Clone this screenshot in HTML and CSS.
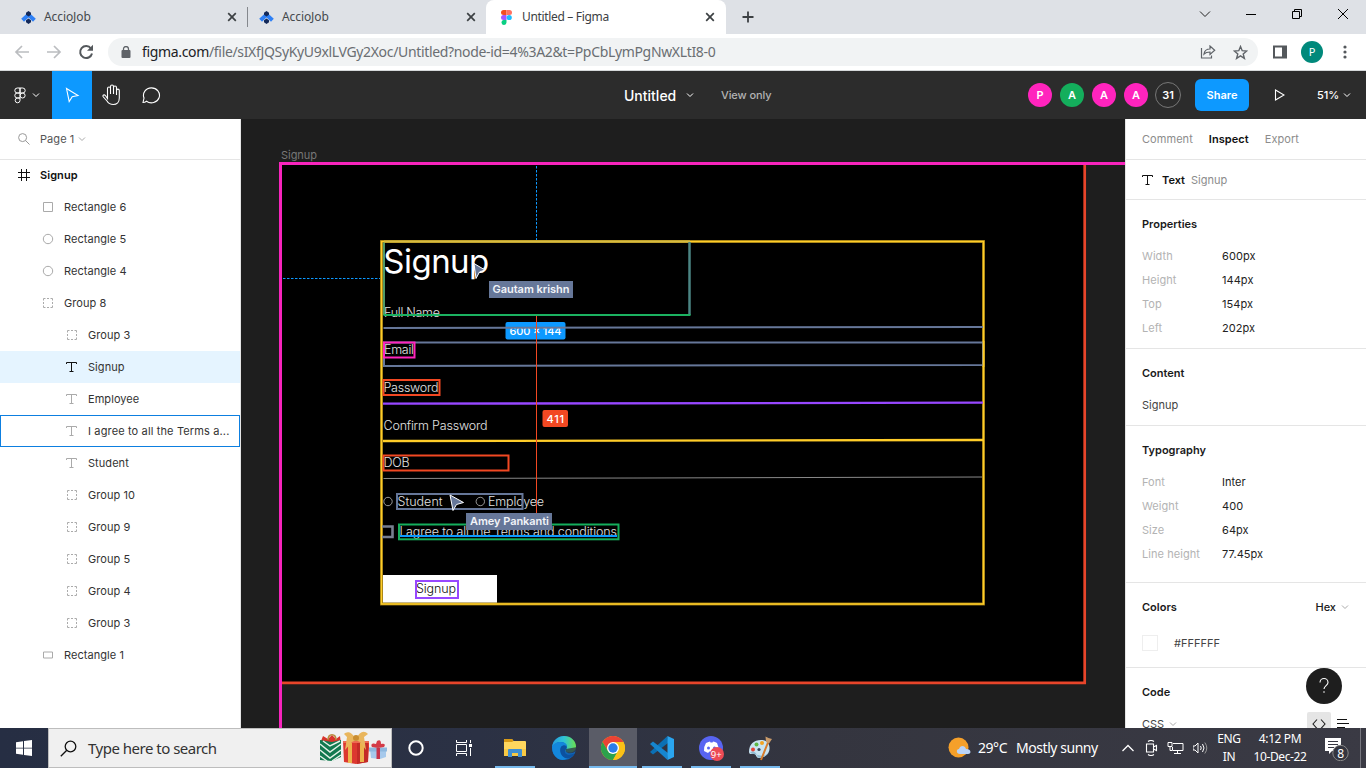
FILE: index.html
```html
<!DOCTYPE html>
<html lang="en">
<head>
<meta charset="utf-8">
<title>Untitled – Figma</title>
<link rel="stylesheet" href="styles.css">
</head>
<body>
<svg class="defs" width="0" height="0">
  <defs>
    <symbol id="chev" viewBox="0 0 8 8"><path d="M1 2.500l3 3 3-3" fill="none" stroke="currentColor"/></symbol>
    <symbol id="close" viewBox="0 0 10 10"><path d="M1.200 1.200l7.600 7.600M8.800 1.200l-7.600 7.600" fill="none" stroke="#3c4043" stroke-width="1.700"/></symbol>
    <symbol id="accio" viewBox="0 0 15 13"><path d="M7.500 1L14.800 7.800 12 10.800 7.500 6.500 3 10.800.2 7.800z" fill="#2f80f5"/><path d="M7.500 0l2.500 1.800v2L7.500 5.500 5 3.800v-2zM7.500 7.500L10 9.200v2L7.500 13 5 11.200v-2z" fill="#13295a"/></symbol>
    <symbol id="text" viewBox="0 0 12 12"><path d="M.5 3V1.500h10V3M5.500 1.500v9M3.500 10.500h4" fill="none" stroke="currentColor"/></symbol>
    <symbol id="group" viewBox="0 0 12 12"><path d="M1.500 3.500v-2h2M5 1.500h2M8.500 1.500h2v2M10.500 5v2M10.500 8.500v2h-2M7 10.500H5M3.500 10.500h-2v-2M1.500 7V5" fill="none" stroke="currentColor"/></symbol>
    <symbol id="square" viewBox="0 0 12 12"><path d="M1.500 1.500h9v9h-9z" fill="none" stroke="currentColor"/></symbol>
    <symbol id="circle" viewBox="0 0 12 12"><circle cx="6" cy="6" r="4.700" fill="none" stroke="currentColor"/></symbol>
    <symbol id="rect" viewBox="0 0 12 12"><path d="M1.500 3h9v6h-9z" fill="none" stroke="currentColor"/></symbol>
  </defs>
</svg>

<header class="tabs">
  <div class="tab tab-first"><svg class="fav" width="15" height="13"><use href="#accio"/></svg><span class="tab-name accio">AccioJob</span><svg width="10" height="10"><use href="#close"/></svg></div>
  <div class="tab tab-second"><svg class="fav" width="15" height="13"><use href="#accio"/></svg><span class="tab-name accio">AccioJob</span><svg width="10" height="10"><use href="#close"/></svg></div>
  <div class="tab tab-active"><svg class="fav-figma" width="11" height="15" viewBox="0 0 11 15"><path d="M5.500 0H2.500a2.500 2.500 0 000 5h3z" fill="#f24e1e"/><path d="M5.500 0h3a2.500 2.500 0 010 5h-3z" fill="#ff7262"/><path d="M5.500 5H2.500a2.500 2.500 0 000 5h3z" fill="#a259ff"/><circle cx="8.200" cy="7.500" r="2.600" fill="#1abcfe"/><path d="M5.500 10H2.500A2.500 2.500 0 105.500 12.500z" fill="#0acf83"/></svg><span class="tab-name">Untitled – Figma</span><svg width="10" height="10"><use href="#close"/></svg></div>
  <svg class="plus" width="12" height="12" viewBox="0 0 12 12"><path d="M6 .5v11M.5 6h11" stroke="#3c4043" stroke-width="1.800"/></svg>
  <div class="win">
    <svg width="12" height="12" viewBox="0 0 12 12"><path d="M1 3.500l5 5 5-5" fill="none" stroke="#222"/></svg>
    <svg width="12" height="12" viewBox="0 0 12 12"><path d="M1 6.500h10" stroke="#000"/></svg>
    <svg width="12" height="12" viewBox="0 0 12 12"><path d="M1.500 3.500h7v7h-7zM3.500 3.500v-2h7v7h-2" fill="none" stroke="#000"/></svg>
    <svg width="12" height="12" viewBox="0 0 12 12"><path d="M1 1l10 10M11 1L1 11" stroke="#000"/></svg>
  </div>
</header>

<nav class="toolbar">
  <svg width="16" height="16" viewBox="0 0 16 16"><path d="M15 8H2M8 2L2 8l6 6" fill="none" stroke="#bbbdc0" stroke-width="1.700"/></svg>
  <svg width="16" height="16" viewBox="0 0 16 16"><path d="M1 8h13M8 2l6 6-6 6" fill="none" stroke="#bbbdc0" stroke-width="1.700"/></svg>
  <svg width="16" height="16" viewBox="0 0 16 16"><path d="M13 4.500A6 6 0 1014 9.500" fill="none" stroke="#54585c" stroke-width="2"/><path d="M15 .8v6H9z" fill="#54585c"/></svg>
  <div class="omni">
    <svg class="lock" width="10" height="12" viewBox="0 0 10 12"><rect x=".5" y="4" width="9" height="8" rx="1" fill="#5f6368"/><path d="M2.500 4.500V3a2.500 2.500 0 015 0v1.500" fill="none" stroke="#5f6368" stroke-width="1.300"/></svg>
    <span class="url"><b>figma.com</b>/file/sIXfJQSyKyU9xlLVGy2Xoc/Untitled?node-id=4%3A2&amp;t=PpCbLymPgNwXLtI8-0</span>
    <svg width="16" height="14" viewBox="0 0 16 14"><path d="M1.500 3v10h10v-2.500M4 9c.5-3.500 2.500-5 6-5V1l4.700 4.300L10 9.500V7C7 7 5.500 7.500 4 9z" fill="none" stroke="#5f6368" stroke-width="1.200"/></svg>
    <svg class="star" width="15" height="15" viewBox="0 0 15 15"><path d="M7.500 1.500l1.700 4.200 4.500.3-3.500 2.900 1.200 4.500-3.900-2.500-3.900 2.500 1.200-4.500L1.300 6l4.500-.3z" fill="none" stroke="#5f6368" stroke-width="1.400"/></svg>
  </div>
  <svg class="side" width="14" height="14" viewBox="0 0 14 14"><path d="M1 1.500h12v11H1z" fill="#fff" stroke="#54585c" stroke-width="2"/><path d="M9 1h4v12H9z" fill="#54585c"/></svg>
  <span class="profile">P</span>
  <svg class="dots" width="4" height="14" viewBox="0 0 4 14" fill="#54585c"><circle cx="2" cy="2" r="1.600"/><circle cx="2" cy="7" r="1.600"/><circle cx="2" cy="12" r="1.600"/></svg>
</nav>

<section class="figbar">
  <div class="menu">
    <svg width="12" height="17" viewBox="0 0 12 17"><path d="M6 1H3.300a2.400 2.400 0 000 5H6zM6 1h2.700a2.400 2.400 0 010 5H6zM6 6H3.300a2.400 2.400 0 000 5H6zM3.300 11A2.400 2.400 0 106 13.500V11z" fill="none" stroke="#fff"/><circle cx="8.600" cy="8.500" r="2.500" fill="none" stroke="#fff"/></svg>
    <svg width="8" height="8"><use href="#chev"/></svg>
  </div>
  <div class="tool tool-on"><svg width="16" height="16" viewBox="0 0 16 16"><path d="M2.500 1.500l11.500 7-5.800 1.300-3 4.700z" fill="none" stroke="#fff" stroke-width="1.100"/></svg></div>
  <div class="tool"><svg width="20" height="22" viewBox="0 0 20 22"><path d="M5.500 12V4.500a1.500 1.500 0 013 0V10 2.500a1.500 1.500 0 013 0V10 3.500a1.500 1.500 0 013 0V11 6.500a1.400 1.400 0 012.800 0V14c0 4-2.500 6.500-6 6.500-3.200 0-5-1.300-6.300-3.500L1.200 12.800c-.8-1.500 1-2.600 2-1.500L5.500 14.500V4.500" fill="none" stroke="#fff" stroke-width="1.100"/></svg></div>
  <div class="tool"><svg width="20" height="18" viewBox="0 0 20 18"><path d="M1 16.500l1-4.500a8 7.500 0 112.500 3.200C3.500 16 2.500 16.500 1 16.500z" fill="none" stroke="#fff" stroke-width="1.100"/></svg></div>
  <div class="doc"><span class="doc-name">Untitled</span><svg width="8" height="8"><use href="#chev"/></svg><span class="viewonly">View only</span></div>
  <div class="people"><i>P</i><i class="green">A</i><i>A</i><i>A</i><i class="more">31</i></div>
  <div class="share">Share</div>
  <svg class="play" width="11" height="12" viewBox="0 0 11 12"><path d="M1.500 1v10l8.500-5z" fill="none" stroke="#fff" stroke-width="1.100"/></svg>
  <span class="zoom">51%</span><svg class="zchev" width="8" height="8"><use href="#chev"/></svg>
</section>

<main class="work">
  <aside class="layers">
    <div class="page"><svg width="12" height="12" viewBox="0 0 12 12"><circle cx="4.600" cy="4.600" r="4" fill="none" stroke="#999"/><path d="M7.500 7.500L11.500 11.500" stroke="#999"/></svg><span>Page 1</span><svg class="pchev" width="8" height="8"><use href="#chev"/></svg></div>
    <div class="row frame"><svg width="12" height="12" viewBox="0 0 12 12"><path d="M3.500 0v12M8.500 0v12M0 3.500h12M0 8.500h12" stroke="#111"/></svg><span>Signup</span></div>
    <div class="row l1"><svg><use href="#square"/></svg><span>Rectangle 6</span></div>
    <div class="row l1"><svg><use href="#circle"/></svg><span>Rectangle 5</span></div>
    <div class="row l1"><svg><use href="#circle"/></svg><span>Rectangle 4</span></div>
    <div class="row l1"><svg><use href="#group"/></svg><span>Group 8</span></div>
    <div class="row l2"><svg><use href="#group"/></svg><span>Group 3</span></div>
    <div class="row l2 selected"><svg><use href="#text"/></svg><span>Signup</span></div>
    <div class="row l2"><svg><use href="#text"/></svg><span>Employee</span></div>
    <div class="row l2 hovered"><svg><use href="#text"/></svg><span>I agree to all the Terms a...</span></div>
    <div class="row l2"><svg><use href="#text"/></svg><span>Student</span></div>
    <div class="row l2"><svg><use href="#group"/></svg><span>Group 10</span></div>
    <div class="row l2"><svg><use href="#group"/></svg><span>Group 9</span></div>
    <div class="row l2"><svg><use href="#group"/></svg><span>Group 5</span></div>
    <div class="row l2"><svg><use href="#group"/></svg><span>Group 4</span></div>
    <div class="row l2"><svg><use href="#group"/></svg><span>Group 3</span></div>
    <div class="row l1"><svg><use href="#rect"/></svg><span>Rectangle 1</span></div>
  </aside>

  <svg class="canvas" width="884" height="609" viewBox="241 119 884 609">
    <text x="281" y="159" class="label" textLength="36">Signup</text>
    <rect x="281" y="164" width="804" height="519" fill="#000"/>
    <path d="M1084.700 165v519M282 682.800h804" class="ln" stroke="#e8452a" stroke-width="2.700"/>
    <path d="M280.500 728V163.500H1125" class="ln" stroke="#f824bd" stroke-width="3"/>
    <path d="M283 278.500h98M536.500 166v74" class="ln" stroke="#0d99ff" stroke-dasharray="2.500 1.500"/>
    <text x="383.300" y="273" class="title" textLength="106">Signup</text>
    <g class="field">
      <text x="384" y="316.500" textLength="56">Full Name</text>
      <text x="384" y="354" textLength="30">Email</text>
      <text x="383.500" y="391.500" textLength="55">Password</text>
      <text x="383.500" y="430" textLength="104">Confirm Password</text>
      <text x="383.500" y="467" textLength="26">DOB</text>
      <text x="397.500" y="506" textLength="45">Student</text>
      <text x="488" y="506" textLength="56">Employee</text>
      <text x="399.500" y="536" textLength="217.500">I agree to all the Terms and conditions</text>
    </g>
    <circle cx="388" cy="501.500" r="4.200" fill="none" stroke="#bbb" stroke-width=".8"/>
    <circle cx="480.300" cy="501.500" r="4.200" fill="none" stroke="#bbb" stroke-width=".8"/>
    <rect x="383" y="575" width="114" height="29" fill="#fff"/>
    <text x="416" y="593" class="btn" textLength="40">Signup</text>
    <path d="M383.500 478.500L640 478 983 477" class="ln" stroke="#999" stroke-width=".9"/>
    <rect x="505.500" y="322" width="60" height="17.500" rx="2" fill="#0d99ff"/>
    <text x="509.500" y="335" class="badge" textLength="52">600 × 144</text>
    <rect x="381.500" y="241.500" width="602" height="362.500" class="ln" stroke="#8a6d12" stroke-width="3"/>
    <rect x="381.500" y="241.500" width="602" height="362.500" class="ln" stroke="#ffcd29" stroke-width="1.600"/>
    <path d="M384 315V242.500" class="ln" stroke="#4f9a68" stroke-width="2"/>
    <path d="M384 241.500h306" class="ln" stroke="#d6bc42" stroke-width="2"/>
    <path d="M689.500 242v73" class="ln" stroke="#4b8583" stroke-width="2.500"/>
    <path d="M383.500 315h307" class="ln" stroke="#1bb160" stroke-width="2"/>
    <path d="M383.500 328L983 327M384 342.500H983V365L384 366z" class="ln" stroke="#667799" stroke-width="2"/>
    <path d="M983.500 341v26" class="ln" stroke="#ffcd29" stroke-width="1.800"/>
    <path d="M383 403.700L983 402.700" class="ln" stroke="#9747ff" stroke-width="2.300"/>
    <path d="M383 441L983 440" class="ln" stroke="#ffcd29" stroke-width="2.300"/>
    <path d="M536.500 316v197" class="ln" stroke="#f24822" stroke-width="1"/>
    <rect x="542.500" y="410" width="25.500" height="17" rx="2" fill="#f24822"/>
    <text x="546.500" y="422.500" class="badge" textLength="17.500">411</text>
    <rect x="384" y="342.500" width="30.500" height="15" class="ln" stroke="#ff24bd" stroke-width="2"/>
    <rect x="383.500" y="380" width="56" height="15" class="ln" stroke="#f24822" stroke-width="2"/>
    <rect x="383.500" y="455.500" width="125" height="15" class="ln" stroke="#f24822" stroke-width="2"/>
    <rect x="397" y="494" width="125.500" height="15" class="ln" stroke="#667799" stroke-width="2"/>
    <path d="M382 526.500h10.500v10.500H382" class="ln" stroke="#777f90" stroke-width="2.600"/>
    <path d="M400 536h217" class="ln" stroke="#0d99ff" stroke-width="2"/>
    <rect x="399" y="524.500" width="219.500" height="14.800" class="ln" stroke="#14ae5c" stroke-width="2"/>
    <rect x="416" y="581" width="42" height="17" class="ln" stroke="#9747ff" stroke-width="2"/>
    <path d="M474 263.500l11 6.500-5.500 2-3.500 6.500z" fill="#667799" stroke="#fff"/>
    <rect x="489" y="281" width="84" height="17" fill="#667799"/>
    <text x="492.500" y="293" class="cursor" textLength="77">Gautam krishn</text>
    <path d="M450 495l13.500 7.500-7 2-3.500 6z" fill="#667799" stroke="#fff"/>
    <rect x="466" y="513" width="86" height="17" fill="#667799"/>
    <text x="470" y="525" class="cursor" textLength="79">Amey Pankanti</text>
  </svg>

  <aside class="inspect">
    <div class="modes"><span>Comment</span><b>Inspect</b><span>Export</span></div>
    <div class="node"><svg width="12" height="12"><use href="#text"/></svg><b>Text</b><span>Signup</span></div>
    <section class="props"><h3>Properties</h3>
      <dl><dt>Width</dt><dd>600px</dd><dt>Height</dt><dd>144px</dd><dt>Top</dt><dd>154px</dd><dt>Left</dt><dd>202px</dd></dl></section>
    <section class="content"><h3>Content</h3><p>Signup</p></section>
    <section class="typo"><h3>Typography</h3>
      <dl><dt>Font</dt><dd>Inter</dd><dt>Weight</dt><dd>400</dd><dt>Size</dt><dd>64px</dd><dt>Line height</dt><dd>77.45px</dd></dl></section>
    <section class="colors"><h3>Colors<span class="hex">Hex<svg width="8" height="8"><use href="#chev"/></svg></span></h3>
      <div class="swatch"><i></i>#FFFFFF</div></section>
    <section class="code"><h3>Code</h3>
      <div class="lang"><span>CSS</span><svg class="pchev" width="8" height="8"><use href="#chev"/></svg>
        <div class="codebtn"><svg width="14" height="12" viewBox="0 0 14 12"><path d="M5 1.500L1 6l4 4.500M9 1.500L13 6l-4 4.500" fill="none" stroke="#222" stroke-width="1.100"/></svg></div>
        <svg width="12" height="12" viewBox="0 0 12 12"><path d="M0 1.500h10M0 5.500h12M0 9.500h8" stroke="#111"/></svg></div></section>
    <div class="help"><svg width="12" height="18" viewBox="0 0 12 18"><path d="M2 5.500a4 4 0 118 0c0 3-4 3.200-4 6.500" fill="none" stroke="#fff" stroke-width="1.100"/><circle cx="6" cy="15" r=".8" fill="#fff"/></svg></div>
  </aside>
</main>

<footer class="taskbar">
  <div class="start"><svg width="16" height="16" viewBox="0 0 16 16" fill="#fff"><path d="M0 2.200l7-1v6.500H0zM8 1l8-1v7.700H8zM0 8.500h7v6.300l-7-1zM8 8.500h8V16l-8-1z"/></svg></div>
  <div class="search">
    <svg width="17" height="17" viewBox="0 0 17 17"><circle cx="10.500" cy="6.500" r="5.300" fill="none" stroke="#111" stroke-width="1.300"/><path d="M6.800 10.200L.8 16.200" stroke="#111" stroke-width="1.300"/></svg>
    <span>Type here to search</span>
    <svg class="gifts" width="70" height="34" viewBox="0 0 70 34">
      <path d="M3 10l2-5 5 3 4-4 4 4 4-3 1 8z" fill="#d8342c"/><path d="M10 9c0-7 8-7 8 0" fill="none" stroke="#b88a3c" stroke-width="1.500"/>
      <path d="M2 9l12 2 9-2v17l-9 4-12-1z" fill="#12794f"/><path d="M2 13l10 8 11-8M2 19l10 8 11-8M2 25l7 5M14 30l9-6M5 10l7 5 10-5" fill="none" stroke="#e5f2e8" stroke-width="1.500"/>
      <path d="M25 10h26v7l-1 14-12 2-12-2z" fill="#dc3830"/><path d="M39 10h11v21l-11 2z" fill="#c42b27"/><path d="M30 11h4v21h-4zM42 11h4v20h-4z" fill="#edb44c"/><path d="M25 11h26" stroke="#ed6b50" stroke-width="2"/>
      <path d="M38 8C33 0 29 0 26 3l3 3-2 13 7-8 4-2 4 2 6 8-2-13 4-3c-4-4-8-3-12 5z" fill="#e9b65d"/><circle cx="38" cy="7" r="3" fill="#c98d31"/>
      <path d="M52 18h16v8l-6 2-9-1z" fill="#a6c9ec"/><path d="M51 16.500h18v4H51z" fill="#8fb8df"/><path d="M58.500 17h3.500v11h-3.500z" fill="#c6344b"/><path d="M60 17l-6-1c-2-4 2-4 4-3l1-3c3-2 4 0 4 3 3-1 5 0 3 3z" fill="#d43b47"/>
    </svg>
  </div>
  <div class="sys"><svg width="18" height="18" viewBox="0 0 18 18"><circle cx="9" cy="9" r="6.700" fill="none" stroke="#fff" stroke-width="2"/></svg></div>
  <div class="sys"><svg width="18" height="18" viewBox="0 0 18 18"><path d="M1.500 1v2.500h10V1M1.500 5.500h10v7h-10zM1.500 17v-2.500h10V17M15.500 1v3M15.500 9v8" fill="none" stroke="#fff"/><path d="M14 5h3v3h-3z" fill="#fff"/></svg></div>
  <div class="apps">
    <div class="app run"><svg width="24" height="24" viewBox="0 0 24 24"><path d="M1 4q0-1 1-1h7l1.500 2H22q1 0 1 1v14H1z" fill="#ffd75e"/><path d="M1 6V4q0-1 1-1h7l1.500 2L9 6z" fill="#d99a15"/><path d="M1 13h22v7H1z" fill="#f8c944"/><path d="M5 14q0-1 1-1h12q1 0 1 1v7h-4v-4H9v4H5z" fill="#3f8fd2"/></svg></div>
    <div class="app"><svg width="24" height="24" viewBox="0 0 24 24"><defs><linearGradient id="eg"><stop offset="0" stop-color="#279bdc"/><stop offset=".5" stop-color="#2fc3d5"/><stop offset="1" stop-color="#6be04d"/></linearGradient></defs><circle cx="12" cy="12" r="12" fill="#1066b8"/><path d="M0 11C1 4 6 0 12 0c7 0 12 5 12 10.500 0 4-3 6-6.500 6-2.500 0-4-.8-4-2 0-1 1.500-1.500 1.500-3.500 0-3-3-5-6.500-5C5 6 2 8 0 11z" fill="url(#eg)"/><path d="M0 11c2-4 5-5 8.500-5 3.500 0 6 1.500 6.500 4-2-1.500-6-1-6.500 3-.5 5 4 8.500 8 8.500-3 3-8 3-11 1C2 20 0 16 0 11z" fill="#1387dc"/><path d="M9 11c-2 4 0 9 4 11 4 1 8-1 10-5-5 3-11 2-10-2.500 0-1 1.500-1.500 1.500-3.500-1.500-2-4-2-5.500 0z" fill="#0c51a0"/><path d="M14 13c-1.500 2.500 1 4.300 4.500 4.300 3 0 4.500-1.300 5.300-2.300l.2 1-1 3h2v-8z" fill="#2b3143" opacity=".75"/></svg></div>
    <div class="app run active"><svg width="24" height="24" viewBox="0 0 24 24"><circle cx="12" cy="12" r="12" fill="#fbc116"/><path d="M1.600 6A12 12 0 0122.400 6H12L7 15z" fill="#ea4335"/><path d="M1.600 6A12 12 0 0012 24l5-9-5 3-5-3z" fill="#2ca24c"/><path d="M17 15l-5 9A12 12 0 0022.400 6H12z" fill="#fbc116"/><circle cx="12" cy="12" r="6" fill="#fff"/><circle cx="12" cy="12" r="4.700" fill="#2b7de9"/></svg></div>
    <div class="app run"><svg width="24" height="24" viewBox="0 0 24 24"><path d="M17.500 0l.5 7L3 18.500 0 16z" fill="#0b70b5"/><path d="M0 8l3-2.500L18 17l-.5 7z" fill="#1686cf"/><path d="M17.500 0L24 3v18l-6.500 3z" fill="#2aa5ef"/></svg></div>
    <div class="app run"><svg width="26" height="26" viewBox="0 0 26 26"><circle cx="13" cy="13" r="12" fill="#5865f2"/><path d="M8 8q3-1.500 4-1.500l.5 1h2l.5-1q2 0 4 1.500 2 4 1.500 8l-4 2-1-1.500h-4L10 18l-4-2q-.5-4 2-8z" fill="#fff"/><circle cx="10.500" cy="13" r="1.500" fill="#5865f2"/><circle cx="16.500" cy="13" r="1.500" fill="#5865f2"/><circle cx="19" cy="19" r="7" fill="#ed4b55"/><text x="12.800" y="22.500" class="nine">9+</text></svg></div>
    <div class="app run"><svg width="26" height="26" viewBox="0 0 26 26"><path d="M2 17C2 9 7 5 14 5c6 0 9 4 8.500 9-.5 6-6 9-11 9-2 0-2-3-4-4-2-.8-5 1.500-5.500-2z" fill="#c9e4f2"/><path d="M3 18c3-3 5-.5 6.500 1s0 4 3 3.500c4 0 8-2 9.500-6-2 4-6 5-9 4" fill="#8fbbd3"/><circle cx="6" cy="14.500" r="2" fill="#e44438"/><circle cx="9.500" cy="9.500" r="2" fill="#5fb947"/><circle cx="15" cy="8" r="2" fill="#f2a323"/><circle cx="12" cy="14.500" r="1.600" fill="#35465a"/><path d="M22 5L14 25" stroke="#d77b2b" stroke-width="2"/><path d="M18.500 1.500l3 1.500 3.500 1-3 4.500-3-1.500z" fill="#c99a6a"/></svg></div>
  </div>
  <div class="weather"><svg width="24" height="22" viewBox="0 0 24 22"><circle cx="10.500" cy="10.500" r="10" fill="#f5a02a"/><path d="M12 17c-4 0-4-5-1-5 1-4 6-4 7 0 5-.5 6 5 2 5z" fill="#b9d3f7"/></svg><span class="deg">29°C</span><span class="cond">Mostly sunny</span></div>
  <div class="tray">
    <svg width="14" height="16" viewBox="0 0 14 16"><path d="M1.500 11L7 5.500 12.500 11" fill="none" stroke="#fff" stroke-width="1.300"/></svg>
    <svg width="14" height="16" viewBox="0 0 14 16"><path d="M4 1.500q3-2 6 0M4 14.500q3 2 6 0M2.500 4h7v8h-7zM9.500 7l3-1.500v5L9.500 9" fill="none" stroke="#fff" stroke-width="1.100"/></svg>
    <svg width="17" height="16" viewBox="0 0 17 16"><path d="M6 3.500h10v7H5.500V7M10.500 10.500v3M7 13.500h7M1 2.500h4v4H1zM3 7v3.500h2" fill="none" stroke="#fff"/></svg>
    <svg width="16" height="16" viewBox="0 0 16 16"><path d="M0 6h2l3-3v10L2 10H0z" fill="none" stroke="#fff"/><path d="M7.500 6q1.500 2 0 4M9.500 4q3 4 0 8" fill="none" stroke="#fff"/><path d="M11.800 2.500q4 5.500 0 11" fill="none" stroke="#999"/></svg>
  </div>
  <div class="lang-ind">ENG<br>IN</div>
  <div class="clock"><span>4:12 PM</span><br>10-Dec-22</div>
  <svg class="notif" width="26" height="26" viewBox="0 0 26 26"><path d="M1 3h16v13H8l-3 3v-3H1z" fill="#fff"/><path d="M4 6.500h10M4 9.500h10M4 12.500h6" stroke="#383943"/><circle cx="16.500" cy="18" r="7.700" fill="#34353f" stroke="#888"/><text x="13.300" y="22.500" class="eight">8</text></svg>
  <div class="peek"></div>
</footer>
</body>
</html>
```
FILE: styles.css
```css
* { box-sizing: border-box; }
body { margin: 0; width: 1366px; height: 768px; overflow: hidden; display: flex; flex-direction: column; font-family: Inter, sans-serif; font-size: 11px; color: #333; background: #fff; }
svg { flex: none; display: block; }
b { font-weight: 600; }
.defs { position: absolute; }

.tabs { height: 34px; flex: none; background: #dee1e6; display: flex; align-items: center; font: 12px/16px "Noto Sans", sans-serif; color: #45494d; }
.tab { display: flex; align-items: center; height: 34px; }
.tab-first { width: 248px; padding: 0 11px 0 21px; }
.tab-first::after { content: ""; width: 1px; height: 20px; background: #85888d; margin-left: 10px; margin-right: -11px; }
.tab-second { width: 238px; padding: 0 10px 0 11px; }
.tab-active { width: 240px; padding: 0 11px 0 15px; background: #fff; border-radius: 8px 8px 0 0; color: #3c4043; }
.tab-name { flex: 1; margin-left: 8px; letter-spacing: -0.1px; }
.tab-active .tab-name { margin-left: 10px; letter-spacing: -0.33px; }
.plus { margin-left: 16px; }
.win { margin-left: auto; display: flex; gap: 34px; padding: 0 17px 6px 0; }

.toolbar { height: 37px; flex: none; display: flex; align-items: center; padding-left: 14px; gap: 16px; border-bottom: 1px solid #d5d8da; }
.omni { width: 1150px; height: 28px; border-radius: 14px; background: #f1f3f4; display: flex; align-items: center; padding: 0 10px 0 13px; margin-left: -2px; }
.url { flex: 1; margin-left: 11px; font: 14px/20px "Noto Sans", sans-serif; color: #6a6e72; letter-spacing: -0.335px; white-space: nowrap; }
.url b { font-weight: 400; color: #202124; }
.star { margin-left: 17px; }
.side { margin-left: -1px; }
.profile { width: 22px; height: 22px; margin-left: -2px; border-radius: 50%; background: #00897b; color: #fff; font: 11px/22px "Noto Sans", sans-serif; text-align: center; }
.dots { margin-left: 4px; }

.figbar { height: 48px; flex: none; background: #2c2c2c; color: #fff; display: flex; align-items: center; }
.menu { width: 52px; display: flex; align-items: center; gap: 6px; padding-left: 14px; }
.tool { width: 40px; height: 48px; display: grid; place-items: center; }
.tool-on { background: #0d99ff; }
.doc { margin-left: 452px; display: flex; align-items: center; width: 404px; }
.doc-name { font-size: 14px; font-weight: 500; width: 62px; }
.viewonly { color: #b3b3b3; font-weight: 500; margin-left: 27px; letter-spacing: -0.1px; }
.people { display: flex; gap: 8px; align-items: center; }
.people i { width: 24px; height: 24px; border-radius: 50%; background: #ff24bd; font: 600 11px/24px Inter, sans-serif; text-align: center; }
.people .green { background: #14ae5c; }
.people .more { width: 26px; height: 26px; margin-left: -1px; background: none; border: 1px solid #777; }
.share { margin-left: 14px; width: 54px; height: 32px; border-radius: 6px; background: #0d99ff; font-weight: 600; line-height: 32px; text-align: center; }
.play { margin-left: 25px; }
.zoom { margin-left: 32px; width: 22px; font-weight: 500; }
.zchev { margin-left: 4px; }

.work { height: 609px; flex: none; display: flex; }
.layers { width: 241px; border-right: 1px solid #e5e5e5; flex: none; letter-spacing: 0.06px; }
.page { height: 41px; margin-bottom: -1px; border-bottom: 1px solid #e5e5e5; display: flex; align-items: center; padding-left: 18px; color: #555; }
.page span { margin-left: 10px; margin-right: 4px; }
.pchev { color: #aaa; }
.row { height: 32px; display: flex; align-items: center; gap: 10px; white-space: nowrap; }
.row svg { width: 12px; height: 12px; color: #aaa; }
.frame { padding-left: 18px; font-weight: 600; color: #111; }
.l1 { padding-left: 42px; }
.l2 { padding-left: 66px; }
.selected { background: #e5f4ff; width: 240px; }
.selected svg { color: #111; }
.hovered { width: 240px; border: 1px solid #0d7fe0; padding-left: 65px; letter-spacing: 0.14px; }

.canvas { background: #1e1e1e; font-family: Inter, sans-serif; }
.ln { fill: none; }
.label { font-size: 11px; fill: #777; }
.title { font-size: 33px; fill: #fff; font-weight: 400; }
.field { font-size: 12.5px; fill: #e2e2e2; font-weight: 300; }
.btn { font-size: 12.5px; fill: #111; font-weight: 300; }
.badge { font-size: 11px; font-weight: 500; fill: #fff; }
.cursor { font-size: 11px; font-weight: 600; fill: #f2f4f8; }

.inspect { width: 241px; border-left: 1px solid #e5e5e5; position: relative; overflow: hidden; }
.modes, .node { border-bottom: 1px solid #e5e5e5; display: flex; align-items: center; padding-left: 16px; color: #8c8c8c; }
.modes { height: 41px; gap: 16px; letter-spacing: 0.06px; }
.modes b, .node b { color: #111; font-weight: 600; }
.node { height: 40px; }
.node svg { color: #111; }
.node b { margin: 0 6px 0 8px; }
.inspect section { border-bottom: 1px solid #e5e5e5; padding: 8px 16px 0; }
.inspect h3 { margin: 0 0 4px; font-size: 11px; font-weight: 600; line-height: 32px; color: #1a1a1a; display: flex; }
.inspect dl { margin: 0; display: grid; grid-template-columns: 80px 1fr; line-height: 24px; letter-spacing: 0.06px; }
.inspect dt { color: #b3b3b3; }
.inspect dd { margin: 0; color: #222; }
.inspect p { margin: 0; line-height: 24px; color: #444; }
.inspect .props { height: 149px; }
.inspect .content { height: 77px; }
.inspect .typo { height: 157px; }
.inspect .colors { height: 85px; }
.inspect .code { border: 0; }
.hex { margin-left: auto; margin-right: 1px; font-weight: 500; display: flex; align-items: center; gap: 5px; }
.hex svg { color: #aaa; }
.swatch { display: flex; align-items: center; gap: 16px; height: 32px; color: #444; }
.swatch i { width: 16px; height: 16px; border: 1px solid #eee; }
.lang { display: flex; align-items: center; height: 24px; color: #444; padding-right: 1px; }
.lang span { margin-right: 5px; }
.codebtn { margin: 0 6px 0 auto; width: 24px; height: 24px; border-radius: 2px; background: #e5e5e5; display: grid; place-items: center; }
.help { position: absolute; left: 180px; top: 549px; width: 36px; height: 36px; border-radius: 50%; background: #1e1e1e; display: grid; place-items: center; }

.taskbar { height: 40px; flex: none; display: flex; align-items: center; background: linear-gradient(90deg, #262e43 0, #2b3144 35%, #34353f 60%, #3a3a44 100%); color: #fff; font: 12px/18px "Noto Sans", sans-serif; }
.start, .sys { width: 48px; display: grid; place-items: center; }
.search { width: 344px; height: 40px; background: #f0f0f0; border: 1px solid #bdbdbd; display: flex; align-items: center; padding: 0 3px 0 11px; color: #333; font-size: 15px; letter-spacing: -0.5px; }
.search span { margin-left: 11px; flex: 1; }
.apps { display: flex; gap: 1px; margin-left: 3px; }
.app { width: 48px; height: 40px; display: grid; place-items: center; position: relative; }
.run::after { content: ""; position: absolute; left: 4px; right: 4px; bottom: 0; height: 2px; background: #76b9ed; }
.active { background: #5a5c67; }
.active::after { left: 0; right: 0; }
.nine { font: 9.5px "Noto Sans", sans-serif; fill: #fff; }
.eight { font: 12px "Noto Sans", sans-serif; fill: #fff; }
.weather { margin-left: 164px; display: flex; align-items: center; width: 173px; font-size: 14px; white-space: nowrap; letter-spacing: -0.45px; }
.deg { margin-left: 6px; width: 38px; }
.tray { display: flex; align-items: center; gap: 9px; width: 91px; }
.lang-ind { width: 34px; text-align: center; letter-spacing: -0.4px; }
.clock { width: 68px; text-align: center; letter-spacing: -0.4px; white-space: nowrap; }
.notif { margin-left: 10px; }
.peek { width: 1px; height: 40px; background: #77777f; margin-left: 10px; }
```
